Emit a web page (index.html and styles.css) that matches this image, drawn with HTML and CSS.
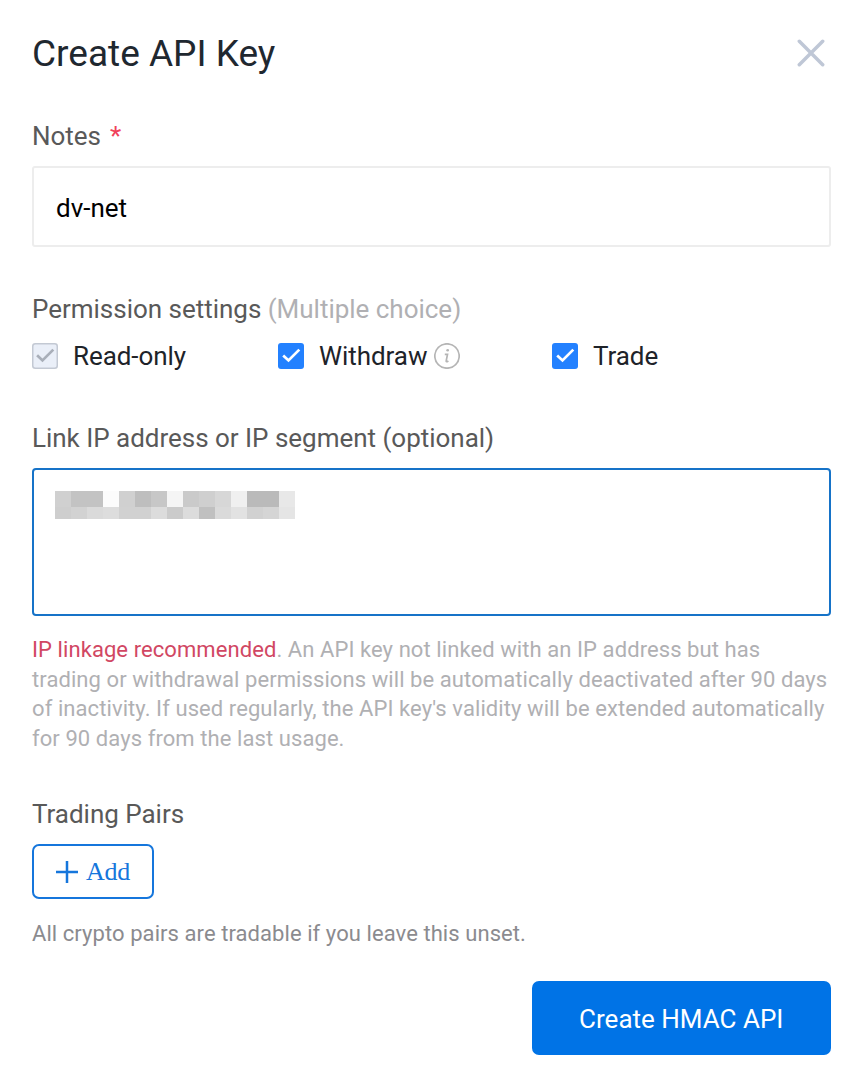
FILE: index.html
```html
<!DOCTYPE html>
<html lang="en">
<head>
<meta charset="utf-8">
<title>Create API Key</title>
<link rel="stylesheet" href="styles.css">
</head>
<body>
<main class="dialog">
  <header class="head">
    <h1 class="title">Create API Key</h1>
    <svg class="close" viewBox="0 0 28 28"><path d="M2.3 2.3 25.7 25.7M25.7 2.3 2.3 25.7"/></svg>
  </header>

  <div class="label notes-label"><span>Notes</span><span class="star">*</span></div>
  <div class="input"><span>dv-net</span></div>

  <div class="label perm-label">Permission settings <span class="muted">(Multiple choice)</span></div>
  <div class="options">
    <div class="option">
      <svg class="check disabled" viewBox="0 0 26 26"><rect x=".75" y=".75" width="24.5" height="24.5" rx="2.5"/><path d="M5.1 12.2l5.4 5.2 10.8-10.8"/></svg>
      <span>Read-only</span>
    </div>
    <div class="option">
      <svg class="check" viewBox="0 0 26 26"><rect width="26" height="26" rx="3"/><path d="M5.2 12.4l5.3 5 10.8-10.8"/></svg>
      <span class="withdraw">Withdraw</span>
      <svg class="info" viewBox="0 0 26 26"><circle cx="13" cy="13" r="12.2"/><path class="dot" d="M13.6 7.3h.1"/><path d="M10.8 11.4h2.7l-1.3 6.4q-.3 1.6 2.2.1"/></svg>
    </div>
    <div class="option">
      <svg class="check" viewBox="0 0 26 26"><rect width="26" height="26" rx="3"/><path d="M5.2 12.4l5.3 5 10.8-10.8"/></svg>
      <span>Trade</span>
    </div>
  </div>

  <div class="label ip-label">Link IP address or IP segment (optional)</div>
  <div class="textarea">
    <svg class="redacted" viewBox="0 0 240 28" shape-rendering="crispEdges">
      <g><rect width="16" height="16" fill="#d0d0d0"/><rect x="16" width="32" height="16" fill="#c3c3c3"/><rect x="48" width="16" height="16" fill="#fcfcfc"/><rect x="64" width="16" height="16" fill="#d0d0d0"/><rect x="80" width="16" height="16" fill="#bebebe"/><rect x="96" width="16" height="16" fill="#c7c7c7"/><rect x="112" width="16" height="16" fill="#f5f5f5"/><rect x="128" width="16" height="16" fill="#cacaca"/><rect x="144" width="16" height="16" fill="#cfcfcf"/><rect x="160" width="16" height="16" fill="#d7d7d7"/><rect x="176" width="16" height="16" fill="#f0f0f0"/><rect x="192" width="32" height="16" fill="#bababa"/><rect x="224" width="16" height="16" fill="#e8e8e8"/></g>
      <g transform="translate(0 16)"><rect width="16" height="12" fill="#cecece"/><rect x="16" width="16" height="12" fill="#d2d2d2"/><rect x="32" width="16" height="12" fill="#dadada"/><rect x="48" width="16" height="12" fill="#dddddd"/><rect x="64" width="32" height="12" fill="#d1d1d1"/><rect x="96" width="16" height="12" fill="#dcdcdc"/><rect x="112" width="16" height="12" fill="#cbcbcb"/><rect x="128" width="16" height="12" fill="#dcdcdc"/><rect x="144" width="16" height="12" fill="#c0c0c0"/><rect x="160" width="16" height="12" fill="#dadada"/><rect x="176" width="16" height="12" fill="#e2e2e2"/><rect x="192" width="16" height="12" fill="#d1d1d1"/><rect x="208" width="16" height="12" fill="#d5d5d5"/><rect x="224" width="16" height="12" fill="#e5e5e5"/></g>
    </svg>
  </div>
  <p class="help"><span class="warn">IP linkage recommended</span>. An API key not linked with an IP address but has<br>trading or withdrawal permissions will be automatically deactivated after 90 days<br>of inactivity. If used regularly, the API key's validity will be extended automatically<br>for 90 days from the last usage.</p>

  <div class="label pairs-label">Trading Pairs</div>
  <div class="add">
    <svg class="plus" viewBox="0 0 22 22"><path d="M11 0v22M0 11h22"/></svg>
    <span>Add</span>
  </div>
  <p class="hint">All crypto pairs are tradable if you leave this unset.</p>
  <div class="submit"><span>Create HMAC API</span></div>
</main>
</body>
</html>
```
FILE: styles.css
```css
* { box-sizing: border-box; }
body { margin: 0; background: #fff; font-family: Roboto, sans-serif; }
.dialog { display: flex; flex-direction: column; width: 866px; height: 1074px; padding: 31px 35px 0 32px; }
.head { display: flex; justify-content: space-between; align-items: center; height: 44px; padding-right: 6px; }
.title { margin: 0; padding-top: 2px; font-size: 37px; line-height: 44px; font-weight: 400; color: #1f2830; }
.close { width: 28px; height: 28px; fill: none; stroke: #bfc7d6; stroke-width: 3.5; stroke-linecap: round; }
.label { height: 30px; line-height: 30px; font-size: 26px; letter-spacing: -.02px; color: #595959; white-space: pre; }
.notes-label { display: flex; gap: 9px; margin-top: 46px; }
.star { color: #f0415a; }
.input { display: flex; align-items: center; height: 81px; margin-top: 15px; padding: 2px 22px 0; border: 2px solid #ededed; border-radius: 3px; font-size: 26px; color: #000; }
.perm-label { margin-top: 47px; }
.muted { color: #b0b0b3; }
.options { display: grid; grid-template-columns: 246px 274px 1fr; height: 30px; margin-top: 17px; font-size: 26px; line-height: 30px; letter-spacing: -.06px; color: #1e2329; }
.option { display: flex; align-items: center; gap: 15px; }
.check { width: 26px; height: 26px; fill: #2381ff; flex: none; }
.check path { fill: none; stroke: #fff; stroke-width: 2.7; }
.disabled rect { fill: #eaeff8; stroke: #c3c9d3; stroke-width: 1.5; }
.disabled path { stroke: #a9afb9; }
.info { width: 26px; height: 26px; margin-left: -8px; fill: none; stroke: #b5b5b5; stroke-width: 1.7; }
.info .dot { stroke-width: 2.6; stroke-linecap: round; }
.ip-label { margin-top: 52px; }
.textarea { height: 148px; margin-top: 15px; padding: 21px; border: 2px solid #1673c8; border-radius: 4px; }
.redacted { display: block; width: 240px; height: 28px; }
.help { margin: 19px 0 0; height: 119px; font-size: 22px; line-height: 29.6px; letter-spacing: .08px; color: #b0b0b3; white-space: nowrap; }
.warn { color: #d14763; }
.pairs-label { margin-top: 45px; }
.add { display: flex; align-items: center; gap: 8px; width: 122px; height: 55px; margin-top: 15px; padding-left: 22px; border: 2px solid #1576dc; border-radius: 7px; font: 26px "Liberation Serif", serif; letter-spacing: -.3px; color: #1576dc; }
.plus { width: 22px; height: 22px; fill: none; stroke: #1576dc; stroke-width: 2.5; }
.hint { margin: 20px 0 0; height: 29px; font-size: 22px; line-height: 29px; letter-spacing: .07px; color: #8b8b8f; }
.submit { display: flex; align-items: center; justify-content: center; align-self: flex-end; width: 299.5px; height: 74px; margin-top: 33px; padding-top: 2px; border-radius: 7px; background: #0073e6; font-size: 26px; color: #fff; }
```
